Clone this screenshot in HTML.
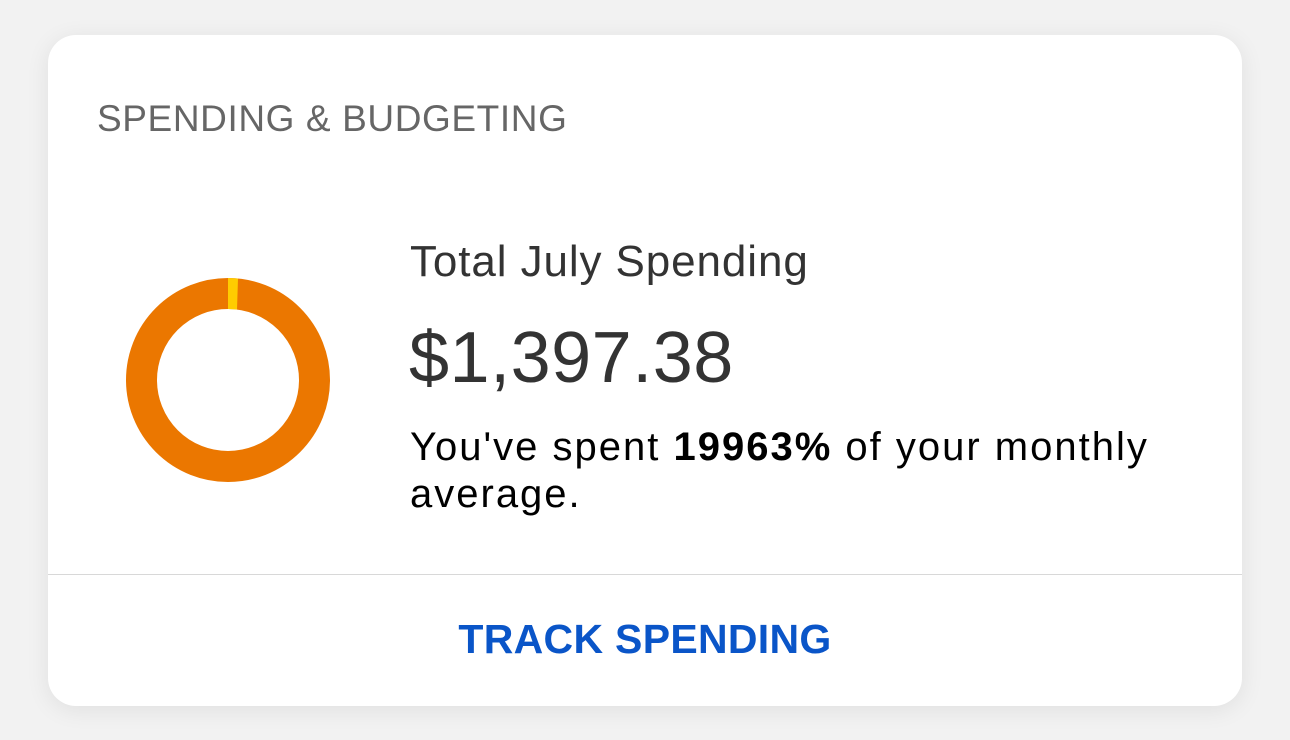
<!DOCTYPE html>
<html><head><style>
html,body{margin:0;padding:0;width:1290px;height:740px;background:#f2f2f2;overflow:hidden;font-family:"Liberation Sans",sans-serif}
.card{position:absolute;left:48px;top:35px;width:1194px;height:671px;background:#fff;border-radius:28px;box-shadow:0 4px 24px rgba(0,0,0,0.08)}
.t{position:absolute;white-space:nowrap;line-height:1}
.div{position:absolute;left:48px;top:574px;width:1194px;height:1px;background:#d8d8d8}
</style></head><body>
<div class="card"></div>
<div class="div"></div>
<div class="t" style="left:97px;top:100px;font-size:37px;letter-spacing:0.6px;color:#666">SPENDING &amp; BUDGETING</div>
<svg style="position:absolute;left:0;top:0" width="1290" height="740">
<circle cx="228" cy="380" r="86.5" fill="none" stroke="#eb7700" stroke-width="31"/>
<path d="M228 278 L238 278.5 L237 309.5 L228 309 Z" fill="#ffcc00"/>
</svg>
<div class="t" style="left:410px;top:240px;font-size:44px;letter-spacing:0.9px;color:#333">Total July Spending</div>
<div class="t" style="left:409px;top:322px;font-size:72px;letter-spacing:0.5px;color:#333">$1,397.38</div>
<div class="t" style="left:410px;top:424px;font-size:40px;line-height:47px;letter-spacing:2px;color:#000">You've spent <b>19963%</b> of your monthly<br>average.</div>
<div class="t" style="left:48px;width:1194px;text-align:center;top:619px;font-size:41px;letter-spacing:0.3px;font-weight:bold;color:#0a55c8">TRACK SPENDING</div>
</body></html>
